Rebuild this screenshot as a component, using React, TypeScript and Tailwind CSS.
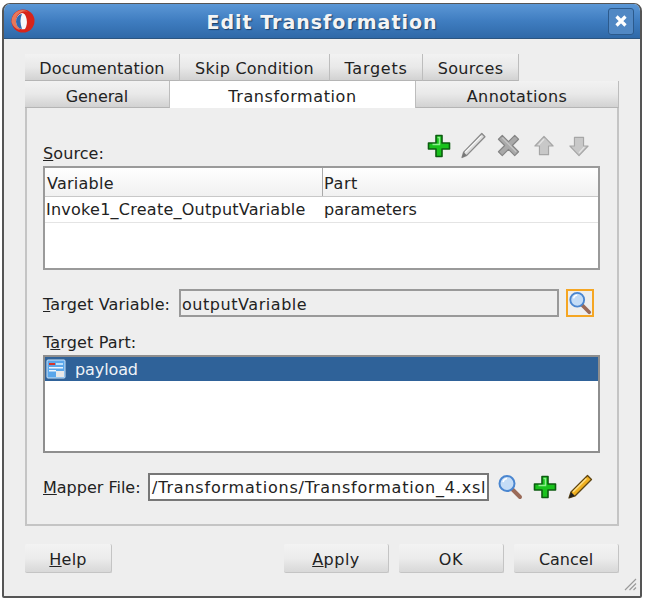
import React from "react";

const font = "font-['DejaVu_Sans',sans-serif]";

function Tab({ label, width, tracking, active, row2 }: { label: string; width: string; tracking: string; active?: boolean; row2?: boolean }) {
	return (
		<div
			className={`${width} ${tracking} ${row2 ? "pt-[5px]" : "pt-[3px]"} flex h-full items-center justify-center border-r border-[#bdbdbd] text-[#222] ${
				active ? "bg-white" : "border-b border-b-[#b5b5b5] bg-gradient-to-b from-[#f2f2f2] via-[#e9e9e9] to-[#d2d2d2]"
			}`}
		>
			{label}
		</div>
	);
}

function Btn({ width, tracking, children }: { width: string; tracking: string; children: React.ReactNode }) {
	return (
		<div className={`${width} ${tracking} flex h-[29px] items-center justify-center rounded-[2px] border-b border-r border-[#c4c4c4] bg-gradient-to-b from-[#f3f3f3] via-[#ececec] to-[#d8d8d8] pt-[3px] text-[#222]`}>
			{children}
		</div>
	);
}

function Plus() {
	return (
		<svg width="26" height="26" viewBox="0 0 26 26">
			<path d="M10 2.500h6v7.500h7.500v6H16v7.500h-6V16H2.500v-6H10z" fill="#19c21c" stroke="#0c5c10" strokeWidth="1.600" strokeLinejoin="round" />
			<path d="M11.500 4.500h2v7h-7" fill="none" stroke="#8df08d" strokeWidth="1.500" />
		</svg>
	);
}

function GreyPencil() {
	return (
		<svg width="27" height="27" viewBox="0 0 26 26">
			<path d="M21 1.500l3 3L6.500 22.500l-4.500 2 1.500-5z" fill="#dcdcdc" stroke="#8a8a8a" strokeWidth="1.300" strokeLinejoin="round" />
			<path d="M20.500 4L5 19.500" stroke="#f7f7f7" strokeWidth="1.200" />
			<path d="M3.500 19.500l3 3-4.500 2z" fill="#777" />
		</svg>
	);
}

function GreyX() {
	return (
		<svg width="23" height="23" viewBox="0 0 24 24">
			<path d="M5.500 1.500L12 8l6.500-6.500 4 4L16 12l6.500 6.500-4 4L12 16l-6.500 6.500-4-4L8 12 1.500 5.500z" fill="#a9a9a9" stroke="#858585" strokeWidth="1.200" strokeLinejoin="round" />
			<path d="M5.500 4L20 18.500" stroke="#c4c4c4" strokeWidth="1.500" />
		</svg>
	);
}

function GreyArrow({ down }: { down?: boolean }) {
	return (
		<svg width="20" height="22" viewBox="0 0 22 24" className={down ? "rotate-180" : ""}>
			<path d="M11 1.500l10 10.500h-5v9.500H6V12H1z" fill="#c8c8c8" stroke="#a6a6a6" strokeWidth="1.300" strokeLinejoin="round" />
			<path d="M11 4.500L5 11" stroke="#e6e6e6" strokeWidth="1.300" />
		</svg>
	);
}

function Lens() {
	return (
		<svg width="26" height="26" viewBox="0 0 26 26">
			<path d="M15.500 15.500L23 23" stroke="#9a6a58" strokeWidth="4" strokeLinecap="round" />
			<circle cx="10" cy="9.500" r="7.500" fill="#c4dcf6" stroke="#4a86d0" strokeWidth="2" />
			<path d="M6 8a4.500 4.500 0 0 1 4-3.500" fill="none" stroke="#fff" strokeWidth="1.500" />
		</svg>
	);
}

function OrangePencil() {
	return (
		<svg width="26" height="26" viewBox="0 0 26 26">
			<path d="M20.500 1.500l4 4L8 22l-6 2 2-6z" fill="#f0b020" stroke="#5e4410" strokeWidth="1.300" strokeLinejoin="round" />
			<path d="M19.500 4.500L6 18" stroke="#fde08a" strokeWidth="1.500" />
			<path d="M4 18l4 4-6 2z" fill="#222" />
		</svg>
	);
}

export default function App() {
	return (
		<div className={`${font} h-[600px] w-[646px] overflow-hidden bg-white pl-[2px] pt-[3px] text-[16px] leading-none text-[#222]`}>
			<div className="h-[595px] w-[640px] overflow-hidden rounded-t-[8px] rounded-b-[2px] border-2 border-t border-[#555] bg-[#eeeeee]">
				{/* TITLE BAR */}
				<div className="flex h-[35px] items-center justify-between border-b border-[#2c5580] bg-gradient-to-b from-[#5b97d6] via-[#3f7dc0] to-[#2f69a8] pl-[6px] pr-[6px]">
					<svg width="26" height="26" viewBox="0 0 26 26">
						<circle cx="13" cy="13" r="11.500" fill="#d8241a" />
						<path d="M1.500 14A11.500 11.500 0 0 1 9 2.500 11 11 0 0 1 18 3.500 10 8 0 0 0 6 10q-1 6 4 12A11.500 11.500 0 0 1 1.500 14z" fill="#e8785a" />
						<path d="M6 13a7 8 0 0 1 6-8 5 9 0 0 1 3 16 7 8 0 0 1-9-8z" fill="#f6f8fb" />
						<path d="M6 14a6 8 0 0 1 6-8q-3 6 0 15a6 8 0 0 1-6-7z" fill="#2f69b0" />
					</svg>
					<span className="pt-[2px] text-[19px] font-bold tracking-[1px] text-[#f4f4f4] [text-shadow:1px_1px_1px_#1c3f66]">Edit Transformation</span>
					<div className="flex h-[27px] w-[26px] items-center justify-center rounded-[3px] border border-[#2c5a8c] bg-[#5188c4] text-white">
						<svg width="14" height="14" viewBox="0 0 14 14">
							<path d="M2.500 2.500l9 9M11.500 2.500l-9 9" stroke="#fff" strokeWidth="3.200" />
						</svg>
					</div>
				</div>

				<div className="pl-[21px] pr-[21px] pt-[15px]">
					{/* TABS */}
					<div className="flex h-[27px] w-[494px]">
						<Tab label="Documentation" width="w-[155px]" tracking="tracking-[0.15px]" />
						<Tab label="Skip Condition" width="w-[150px]" tracking="tracking-[0.25px]" />
						<Tab label="Targets" width="w-[93px]" tracking="tracking-[0.75px]" />
						<Tab label="Sources" width="w-[96px]" tracking="tracking-[0.35px]" />
					</div>
					<div className="flex h-[27px] w-[594px]">
						<Tab label="General" width="w-[145px]" tracking="tracking-[-0.1px]" row2 />
						<Tab label="Transformation" width="w-[246px]" tracking="tracking-[0.6px]" active row2 />
						<Tab label="Annotations" width="w-[203px]" tracking="tracking-[0.4px]" row2 />
					</div>

					{/* PANEL */}
					<div className="h-[418px] w-[594px] border-x-2 border-b-2 border-[#c4c4c4] pl-[16px] pr-[18px] pt-[23px]">
						<div className="flex h-[35px] items-end justify-between">
							<span className="mb-[4px] tracking-[0.1px]"><u>S</u>ource:</span>
							<div className="mb-[7px] mr-[3px] flex items-center">
								<div className="flex w-[35px] justify-center"><Plus /></div>
								<div className="flex w-[35px] justify-center"><GreyPencil /></div>
								<div className="flex w-[35px] justify-center"><GreyX /></div>
								<div className="flex w-[35px] justify-center"><GreyArrow /></div>
								<div className="flex w-[35px] justify-center"><GreyArrow down /></div>
							</div>
						</div>

						<div className="h-[104px] w-[557px] border-2 border-[#9a9a9a] bg-white">
							<div className="flex h-[29px] border-b border-[#c8c8c8] bg-gradient-to-b from-white to-[#f1f1f1]">
								<div className="flex w-[278px] items-center border-r border-[#aaa] pl-[2px] pt-[4px] tracking-[0.25px]">Variable</div>
								<div className="flex items-center pl-[1px] pt-[4px] tracking-[0.6px]">Part</div>
							</div>
							<div className="flex h-[26px] border-b border-[#e4e4e4]">
								<div className="flex w-[278px] items-center whitespace-nowrap pl-[1px] tracking-[0.25px]">Invoke1_Create_OutputVariable</div>
								<div className="flex items-center pl-[1px] tracking-[0px]">parameters</div>
							</div>
						</div>

						<div className="mt-[19px] flex h-[28px] items-center">
							<span className="w-[136px] pt-[3px] tracking-[0.15px]"><u>T</u>arget Variable:</span>
							<div className="flex h-[28px] w-[380px] items-center border-2 border-[#999] bg-[#eeeeee] pl-[1px] pt-[3px] tracking-[0.55px]">outputVariable</div>
							<div className="ml-[7px] flex h-[28px] w-[28px] items-center justify-center border-2 border-[#f5a623]">
								<Lens />
							</div>
						</div>

						<div className="mt-[16px] h-[22px] pt-[2px] tracking-[0.15px]">T<u>a</u>rget Part:</div>

						<div className="h-[98px] w-[557px] border-2 border-[#8e8e8e] bg-white">
							<div className="flex h-[24px] items-center bg-[#2f6299] pl-[1px] text-[#eef3f8]">
								<svg width="20" height="20" viewBox="0 0 20 20">
									<rect x="1" y="1" width="18" height="18" rx="1" fill="#5aa6ea" stroke="#cfe4f7" />
									<rect x="3" y="4" width="6" height="2" fill="#d8352a" />
									<rect x="10" y="4" width="7" height="2" fill="#bfe0fa" />
									<rect x="3" y="8" width="14" height="1.500" fill="#eaf4fd" />
									<rect x="3" y="11" width="7" height="1.500" fill="#eaf4fd" />
									<rect x="10" y="12" width="8" height="6" fill="#e8e8e8" />
								</svg>
								<span className="ml-[9px] pt-[2px] tracking-[-0.1px]">payload</span>
							</div>
						</div>

						<div className="mt-[20px] flex h-[28px] items-center">
							<span className="w-[105px] pt-[2px] tracking-[0px]"><u>M</u>apper File:</span>
							<div className="flex h-[28px] w-[341px] items-center whitespace-nowrap border-2 border-[#777] bg-white pl-[2px] pt-[2px] tracking-[0.8px]">/Transformations/Transformation_4.xsl</div>
							<div className="ml-[8px] flex items-center">
								<div className="flex w-[26px] justify-center"><Lens /></div>
								<div className="ml-[9px] flex w-[26px] justify-center"><Plus /></div>
								<div className="ml-[9px] flex w-[26px] justify-center"><OrangePencil /></div>
							</div>
						</div>
					</div>

					{/* BUTTONS */}
					<div className="mt-[18px] flex w-[594px] items-center">
						<Btn width="w-[87px]" tracking="tracking-[0.2px]"><u>H</u>elp</Btn>
						<div className="ml-auto flex gap-[10px]">
							<Btn width="w-[105px]" tracking="tracking-[0.5px]"><u>A</u>pply</Btn>
							<Btn width="w-[105px]" tracking="tracking-[0.6px]">OK</Btn>
							<Btn width="w-[105px]" tracking="tracking-[0px]">Cancel</Btn>
						</div>
					</div>
				</div>

				<div className="mr-[3px] mt-[4px] flex justify-end">
					<svg width="14" height="14" viewBox="0 0 14 14">
						<path d="M13 2L2 13M13 6.500L6.500 13M13 10.500L10.500 13" stroke="#9a9a9a" strokeWidth="1.200" />
					</svg>
				</div>
			</div>
		</div>
	);
}
